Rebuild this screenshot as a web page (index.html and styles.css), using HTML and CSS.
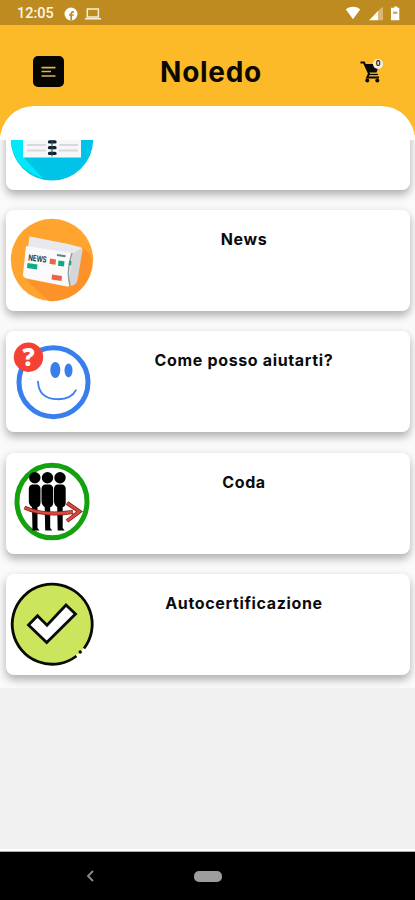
FILE: index.html
```html
<!DOCTYPE html>
<html lang="it">
<head>
<meta charset="utf-8">
<meta name="viewport" content="width=device-width, initial-scale=1">
<title>Noledo</title>
<link rel="stylesheet" href="styles.css">
</head>
<body>
<div class="status">
  <span class="clock">12:05</span>
  <svg class="fb" width="14" height="14" viewBox="0 0 14 14"><circle cx="7" cy="7" r="6.5" fill="#fff"/><path d="M7.2 13.6V7.2Q7.2 4.7 10 4.9M5 8H9.8" fill="none" stroke="#bd8b1f" stroke-width="1.7"/></svg>
  <svg class="laptop" width="16" height="12" viewBox="0 0 16 12"><path d="M2.3 1H13.4V9H2.3ZM0 10.7H16" fill="none" stroke="#f7efdd" stroke-width="1.5"/></svg>
  <svg class="signals" width="56" height="15" viewBox="0 0 56 15"><path d="M0.8 3.2Q8 -1.6 15.3 3.2L8 13.2Z" fill="#fff"/><path d="M24 14.2 33.5 4.5V14.2Z" fill="#fff"/><path d="M33.5 4.5 38 0.5V14.2H33.5Z" fill="#d8b873"/><path d="M47 1.8H49.3V.5H52.3V1.8H54.3V14.2H46V1.8Z" fill="#fff"/><path d="M48 5.5H52.3V8H48Z" fill="#d2ad60"/></svg>
</div>
<header class="header">
  <div class="toolbar">
    <button class="menu" aria-label="Menu"><svg width="31" height="31" viewBox="0 0 31 31"><path d="M8.5 11.6H22.5M8.5 15.5H18M8.5 20H22.5" stroke="#d9b653" stroke-width="1.6"/></svg></button>
    <h1>Noledo</h1>
    <div class="cart">
      <svg width="26" height="26" viewBox="0 0 26 26"><path d="M1.5 3.5H5L10 14.7 8.2 18.4H20" fill="none" stroke="#0b0904" stroke-width="2"/><path d="M5.4 5H20.5L17.5 13.6H9Z" fill="#0b0904"/><path d="M9 15.5H19" stroke="#0b0904" stroke-width="1.3"/><circle cx="8.3" cy="21.4" r="2" fill="#0b0904"/><circle cx="18.3" cy="21.4" r="2" fill="#0b0904"/></svg>
      <span class="badge">0</span>
    </div>
  </div>
  <div class="sheet"></div>
</header>
<main class="list">
  <div class="cards">
    <article class="card">
      <svg class="pic" viewBox="6 88.6 94 101"><circle cx="52" cy="139" r="41.2" fill="#00c4e7"/><path d="M23 156 43 178Q12 168 10.8 139H23Z" fill="#00e8fa"/><path d="M23 115H81V157H23Z" fill="#f7f7f9"/><path d="M27 144.5H46M27 150H46M59 144.5H78M59 150H78" stroke="#d8d9e0" stroke-width="2"/><path d="M49.5 141.5H55M49.5 147.3H55M49.5 153H55" stroke="#10212b" stroke-width="3.3" stroke-linecap="round"/><path d="M52 140V156" stroke="#24485a" stroke-width="1"/></svg>
    </article>
    <article class="card">
      <svg class="pic" viewBox="6 210 94 101"><circle cx="52" cy="260" r="41.2" fill="#ffa42f"/><path d="M80 246 91 255Q95 281 73 295 61 302 49 301L25 279 70 287Z" fill="#fb922a"/><path d="M30 236.5 80.5 247Q83 248 82.5 250L77.5 280Q76 286 69 286L66 252 29 246Z" fill="#d4d6da"/><path d="M28 247 29.5 236.5 68 244 82 248 72 254Z" fill="#e8e9ec"/><path d="M26 246 72 253 69 283Q70 287 67 286.5L27 278.5Q23 277.5 23 274.5Z" fill="#fafafb"/><path d="M72 253Q66 270 70 286" fill="none" stroke="#9a9b9f" stroke-width="1.5"/><text x="28" y="260.5" transform="rotate(7 28 260)" textLength="18.5" lengthAdjust="spacingAndGlyphs" class="paper">NEWS</text><path d="M27.5 263 37.5 264.5 37 269.5 27 268ZM58.5 260.5 64.5 261.3 64 266.5 58 265.7ZM69.5 260.5 71.5 261 71 265.5 69 265Z" fill="#12a886"/><path d="M50 258.5 56 259.5 55.5 264.7 49.5 263.7ZM52 274.5 62 276 61.5 281 51.5 279.5Z" fill="#ee6249"/><path d="M57 255 65.5 256.3" stroke="#5d8580" stroke-width="2"/></svg>
      <h2>News</h2>
    </article>
    <article class="card">
      <svg class="pic" viewBox="6 331.3 94 101"><circle cx="53.5" cy="382.5" r="34.5" fill="#fff" stroke="#397eed" stroke-width="5"/><ellipse cx="55.3" cy="370.3" rx="5" ry="8" fill="#397eed"/><ellipse cx="68.5" cy="370.7" rx="4" ry="7" fill="#397eed"/><path d="M38 382Q39 399 57 399.5 71 400 76 390.5" fill="none" stroke="#397eed" stroke-width="1.8" stroke-linecap="round"/><circle cx="28.5" cy="357.5" r="14.7" fill="#f44336"/><text x="28.5" y="366.3" text-anchor="middle" class="question">?</text></svg>
      <h2>Come posso aiutarti?</h2>
    </article>
    <article class="card">
      <svg class="pic" viewBox="6 453 94 101"><ellipse cx="52" cy="501.5" rx="35" ry="36.3" fill="#fff" stroke="#13a10e" stroke-width="5"/><g fill="#000"><g id="person"><circle cx="34.8" cy="477.7" r="5.7"/><path d="M32 484.5H37.5Q40.5 485.5 40.5 489V503Q40 507 37.5 507V528L39.5 530.5H32.5L32 507Q28.8 505 28.8 501V489Q29 485 32 484.5Z"/></g><use href="#person" x="12.7"/><use href="#person" x="25.2"/></g><path d="M24.5 507.5Q43 516.5 73 512M67 503 79.5 511.5 67 521" fill="none" stroke="#7b211c" stroke-width="4"/><path d="M24.5 507.5Q43 516.5 73 512M67 503 79.5 511.5 67 521" fill="none" stroke="#dc493e" stroke-width="2.3"/></svg>
      <h2>Coda</h2>
    </article>
    <article class="card">
      <svg class="pic" viewBox="6 574 94 101"><circle cx="52" cy="623.7" r="40" fill="#cbe65c"/><path d="M76.5 656A40 40 0 1 1 84 648.5" fill="none" stroke="#080a05" stroke-width="2.8"/><circle cx="80.2" cy="652" r="1.7" fill="#080a05"/><path d="M28.5 625 37.5 615.7 47 625.2 66 605 75.5 614 46.7 642.5Z" fill="#fff" stroke="#080a05" stroke-width="2.8"/></svg>
      <h2>Autocertificazione</h2>
    </article>
  </div>
</main>
<nav class="navbar">
  <svg class="back" width="10" height="14" viewBox="0 0 10 14"><path d="M8 2 3 7 8 12" fill="none" stroke="#8d8d8d" stroke-width="1.8"/></svg>
  <span class="home"></span>
</nav>
</body>
</html>
```
FILE: styles.css
```css
* { box-sizing: border-box; }
body {
  margin: 0;
  height: 900px;
  display: flex;
  flex-direction: column;
  overflow: hidden;
  background: #f0f0f0;
  font-family: Inter, "Open Sans", sans-serif;
  color: #0b0b0b;
}
.status {
  height: 25px;
  flex: none;
  display: flex;
  align-items: center;
  padding: 2px 14px 0 17px;
  background: #bd8b1f;
}
.clock {
  width: 47px;
  font: 500 14.5px Roboto, sans-serif;
  color: #fbf5e9;
}
.laptop { margin-left: 7px; }
.signals { margin-left: auto; }
.header {
  height: 115px;
  flex: none;
  display: flex;
  flex-direction: column;
  background: linear-gradient(#fcb928 110px, #fff 110px);
}
.toolbar {
  height: 81px;
  flex: none;
  display: grid;
  grid-template-columns: 80px 1fr 80px;
  align-items: center;
  padding: 12px 0 0 6px;
}
.menu {
  width: 31px;
  height: 31px;
  margin-left: 27px;
  padding: 0;
  border: 0;
  border-radius: 5px;
  background: #070502;
}
.menu svg { display: block; }
h1 {
  margin: 1px 0 0 1px;
  text-align: center;
  font-size: 28px;
  line-height: 32px;
  font-weight: 700;
  letter-spacing: .7px;
  color: #0b0904;
}
.cart {
  position: relative;
  width: 26px;
  height: 26px;
  margin-left: 24px;
}
.cart svg { display: block; }
.badge {
  position: absolute;
  left: 14px;
  top: 0;
  width: 10px;
  height: 10px;
  border-radius: 50%;
  background: #f4f1ec;
  font-size: 7px;
  line-height: 10px;
  font-weight: 700;
  text-align: center;
}
.sheet {
  flex: 1;
  background: #fff;
  border-radius: 36px 36px 0 0;
}
.list {
  flex: 1;
  overflow: hidden;
}
.cards {
  display: flex;
  flex-direction: column;
  gap: 20.3px;
  margin-top: -51.4px;
  padding: 0 5px 13px 6px;
  background: #fafafa;
}
.card {
  height: 101px;
  flex: none;
  display: flex;
  border-radius: 8px;
  background: #fff;
  box-shadow: 0 5px 9px rgba(0, 0, 0, .25), 0 2px 10px rgba(0, 0, 0, .08);
}
.pic {
  width: 94px;
  height: 101px;
  flex: none;
}
.paper { font: 700 8.5px Inter, sans-serif; fill: #34383e; }
.question { font: 800 24px "Open Sans", sans-serif; fill: #fff; }
h2 {
  flex: 1;
  margin: 19px 22px 0 0;
  text-align: center;
  font-size: 16px;
  line-height: 20px;
  font-weight: 700;
  letter-spacing: .65px;
  white-space: nowrap;
}
.navbar {
  height: 48px;
  flex: none;
  display: flex;
  align-items: center;
  background: #000;
  box-shadow: 0 -1px 0 #aaa, 0 -3px 0 #fff;
}
.back { margin-left: 85px; }
.home {
  width: 28px;
  height: 11px;
  margin-left: 99px;
  border-radius: 5px;
  background: #9d9d9d;
}
```
